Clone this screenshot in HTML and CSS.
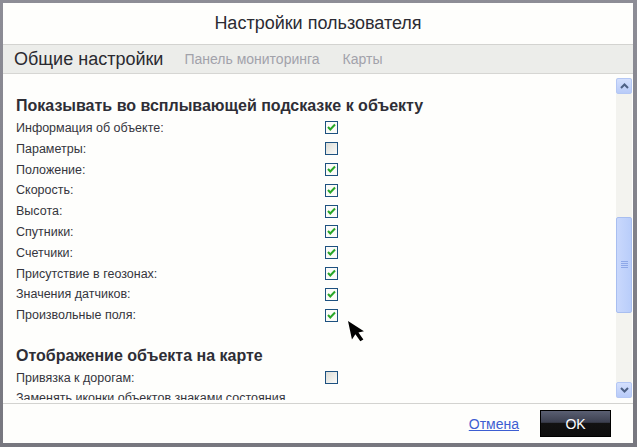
FILE: index.html
```html
<!DOCTYPE html>
<html lang="ru">
<head>
    <meta charset="UTF-8">
    <title>Настройки пользователя</title>
    <link rel="stylesheet" href="styles.css">
</head>
<body>
    <div class="dialog">
        <div class="dialog-title">Настройки пользователя</div>

        <!-- Tabs -->
        <div class="tabs">
            <span class="tab active">Общие настройки</span>
            <span class="tab">Панель мониторинга</span>
            <span class="tab">Карты</span>
        </div>

        <!-- Settings list -->
        <div class="content">
            <div class="settings">
                <h3 class="section-title">Показывать во всплывающей подсказке к объекту</h3>
                <div class="row"><span>Информация об объекте:</span><span class="check on"></span></div>
                <div class="row"><span>Параметры:</span><span class="check"></span></div>
                <div class="row"><span>Положение:</span><span class="check on"></span></div>
                <div class="row"><span>Скорость:</span><span class="check on"></span></div>
                <div class="row"><span>Высота:</span><span class="check on"></span></div>
                <div class="row"><span>Спутники:</span><span class="check on"></span></div>
                <div class="row"><span>Счетчики:</span><span class="check on"></span></div>
                <div class="row"><span>Присутствие в геозонах:</span><span class="check on"></span></div>
                <div class="row"><span>Значения датчиков:</span><span class="check on"></span></div>
                <div class="row"><span>Произвольные поля:</span><span class="check on"></span></div>

                <h3 class="section-title second">Отображение объекта на карте</h3>
                <div class="row"><span>Привязка к дорогам:</span><span class="check"></span></div>
                <div class="row"><span>Заменять иконки объектов знаками состояния</span></div>
            </div>

            <div class="scrollbar">
                <div class="scroll-btn">
                    <svg width="9" height="6" viewBox="0 0 9 6"><path d="M1 5 L4.5 1.5 L8 5" fill="none" stroke="#4d6185" stroke-width="2"/></svg>
                </div>
                <div class="scroll-track">
                    <div class="scroll-thumb"><span class="grip"></span></div>
                </div>
                <div class="scroll-btn">
                    <svg width="9" height="6" viewBox="0 0 9 6"><path d="M1 1 L4.5 4.5 L8 1" fill="none" stroke="#4d6185" stroke-width="2"/></svg>
                </div>
            </div>
        </div>

        <div class="footer">
            <a class="cancel-link" href="#">Отмена</a>
            <button class="ok-btn">OK</button>
        </div>
    </div>

    <!-- mouse pointer over the dialog -->
    <svg class="cursor" width="24" height="26" viewBox="0 0 24 26">
        <path d="M0 0 L0 17 L4 13 L7 20 L10 19 L7 12 L12 12 Z" fill="#000" transform="translate(1 1) scale(1.12) rotate(-12)"/>
    </svg>
</body>
</html>
```

FILE: styles.css
```css
/* General Styles */
* {
    box-sizing: border-box;
}

html, body {
    height: 100%;
    margin: 0;
    font-family: Arial, "Liberation Sans", sans-serif;
    color: #333;
}

body {
    background: linear-gradient(#8d8d96, #77777f);
    padding: 3px 4px 4px 3px;
    position: relative;
}

/* Dialog */
.dialog {
    height: 440px;
    display: flex;
    flex-direction: column;
    background: #fefefc;
}

.dialog-title {
    height: 42px;
    line-height: 40px;
    text-align: center;
    font-size: 18px;
    color: #2b2b33;
    border-bottom: 1px solid #d3d3d0;
}

/* Tabs */
.tabs {
    height: 29px;
    display: flex;
    align-items: center;
    gap: 21px;
    padding: 0 11px;
    background: #ecedea;
    border-bottom: 1px solid #d6d6d3;
}

.tab {
    font-size: 14px;
    color: #a2a2aa;
}

.tab.active {
    font-size: 18px;
    color: #2a2a30;
}

.tab:last-child {
    margin-left: 2px;
}

/* Content */
.content {
    height: 330px;
    display: flex;
    border-bottom: 1px solid #d3d3d0;
}

.settings {
    flex: 1;
    overflow: hidden;
    padding: 21px 0 0 13px;
    margin-bottom: 3px;
}

.section-title {
    margin: 0;
    height: 22.6px;
    line-height: 22px;
    font-size: 16px;
    font-weight: bold;
    color: #2e2e36;
}

.section-title.second {
    margin-top: 19px;
}

.row {
    display: grid;
    grid-template-columns: 309px 13px;
    align-items: center;
    height: 20.8px;
    font-size: 12.5px;
    color: #35353d;
    white-space: nowrap;
}

.check {
    width: 13px;
    height: 13px;
    border: 1px solid #1d5180;
    background: linear-gradient(135deg, #dcdcd5, #fbfbf9);
}

.check.on {
    background: #fbfbf8 url("data:image/svg+xml,%3Csvg xmlns='http://www.w3.org/2000/svg' width='11' height='11'%3E%3Cpath d='M2 5 L4.3 7.5 L9 2.5' fill='none' stroke='%2328a628' stroke-width='2'/%3E%3C/svg%3E") no-repeat center;
}

/* Scrollbar */
.scrollbar {
    width: 16px;
    margin: 4px 1px 5px 0;
    display: flex;
    flex-direction: column;
    background: #f3f3ef;
}

.scroll-btn {
    height: 16px;
    display: flex;
    align-items: center;
    justify-content: center;
    background: linear-gradient(#d4e0fd, #b8cbf8);
    border: 1px solid #b4c7f4;
    border-radius: 2px;
}

.scroll-track {
    flex: 1;
    padding-top: 123px;
}

.scroll-thumb {
    height: 96px;
    display: flex;
    align-items: center;
    justify-content: center;
    background: linear-gradient(90deg, #c9d8fc, #b9cdfa);
    border: 1px solid #a8bef0;
    border-radius: 2px;
}

.grip {
    width: 7px;
    height: 8px;
    background: repeating-linear-gradient(#8ea8e8 0 1px, transparent 1px 2px);
}

/* Footer */
.footer {
    flex: 1;
    display: flex;
    align-items: center;
    justify-content: flex-end;
    gap: 21px;
    padding: 0 22px 0 0;
}

.cancel-link {
    font-size: 14px;
    color: #3d5ed2;
    text-decoration: underline;
}

.ok-btn {
    width: 71px;
    height: 27px;
    font-family: Arial, "Liberation Sans", sans-serif;
    font-size: 14px;
    color: #fff;
    border: 1px solid #000;
    background: linear-gradient(#5a5f72, #3c4050 45%, #121212 50%, #0e0e0e);
    cursor: pointer;
}

.cursor {
    position: absolute;
    left: 347px;
    top: 320px;
}
```
